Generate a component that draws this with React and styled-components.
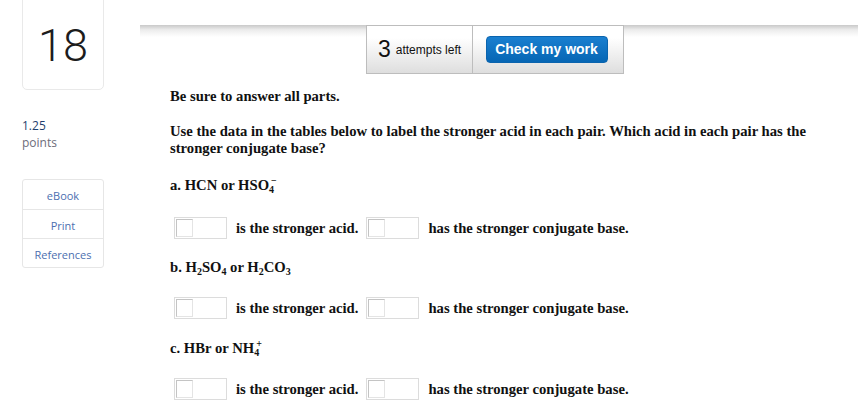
import React from "react";
import styled, { createGlobalStyle } from "styled-components";

const GlobalStyle = createGlobalStyle`
  body {
    margin: 0;
    background: #ffffff;
  }
`;

const Page = styled.div`
  display: flex;
  width: 858px;
  height: 416px;
  overflow: hidden;
`;

const Sidebar = styled.div`
  width: 82px;
  margin-left: 22px;
  display: flex;
  flex-direction: column;
  font-family: "Open Sans", "Liberation Sans", sans-serif;
`;

const NumberCard = styled.div`
  height: 97px;
  margin-top: -7px;
  box-sizing: border-box;
  border: 1px solid #e9e9e9;
  border-radius: 5px;
  display: flex;
  align-items: center;
  justify-content: center;
  font-family: Roboto, "Open Sans", sans-serif;
  font-weight: 300;
  font-size: 45px;
  color: #1c1c1c;
  padding-top: 8px;
`;

const Points = styled.div`
  margin-top: 27px;
  font-size: 12px;
  line-height: 17px;
  color: #1f3f6e;
  span {
    display: block;
    color: #6d6d7a;
  }
`;

const LinkList = styled.div`
  margin-top: 28px;
  border: 1px solid #e6e6e6;
  border-radius: 3px;
`;

const LinkItem = styled.div`
  height: 29px;
  display: flex;
  align-items: center;
  justify-content: center;
  padding-top: 2px;
  box-sizing: border-box;
  font-size: 11px;
  color: #4c6fb0;
  & + & {
    border-top: 1px solid #e6e6e6;
  }
`;

const Main = styled.div`
  flex: 1;
  margin-left: 36px;
  display: flex;
  flex-direction: column;
`;

const TopBar = styled.div`
  margin-top: 25px;
  padding-left: 226px;
  display: flex;
  background-image: linear-gradient(#c9c9c9, #ececec 40%, #ffffff);
  background-size: 100% 12px;
  background-repeat: no-repeat;
`;

const BarCell = styled.div`
  height: 49px;
  box-sizing: border-box;
  width: ${(p) => p.w}px;
  border: 1px solid #bdbdbd;
  border-left-width: ${(p) => (p.first ? 1 : 0)}px;
  background: linear-gradient(#ffffff 25%, #dedede);
  display: flex;
  align-items: center;
  justify-content: center;
  font-family: "Liberation Sans", Arial, sans-serif;
  color: #111;
`;

const AttemptsNum = styled.span`
  font-size: 23px;
  margin-right: 5px;
  line-height: 1;
`;

const AttemptsText = styled.span`
  font-size: 12px;
  margin-top: 1px;
`;

const CheckButton = styled.button`
  width: 122px;
  height: 27px;
  margin-left: -3px;
  margin-top: -1px;
  border: 1px solid #0a64ae;
  border-radius: 4px;
  background: linear-gradient(#1a7fd0, #0666b4);
  color: #fff;
  font-family: "Liberation Sans", Arial, sans-serif;
  font-weight: bold;
  font-size: 14px;
  padding: 0;
`;

const Content = styled.div`
  padding: 14px 20px 0 30px;
  font-family: "Liberation Serif", "Times New Roman", serif;
  font-weight: bold;
  font-size: 11pt;
  line-height: 17px;
  color: #111;
`;

const Para = styled.p`
  margin: 0 0 ${(p) => p.mb ?? 18}px;
  sub {
    font-size: 10px;
    line-height: 0;
    vertical-align: -3px;
  }
  sup {
    font-size: 10px;
    line-height: 0;
    vertical-align: 6px;
    margin-left: -3px;
  }
`;

const AnswerRow = styled.div`
  display: flex;
  align-items: center;
  height: 22px;
  margin: ${(p) => p.mt}px 0 ${(p) => p.mb}px 4px;
`;

const DropBox = styled.div`
  width: 53px;
  height: 22px;
  box-sizing: border-box;
  border: 1px solid #dcdcdc;
  padding: 1px;
  margin-right: ${(p) => p.mr}px;
  div {
    width: 17px;
    height: 18px;
    box-sizing: border-box;
    border: 1px solid #c4c4c4;
    border-right-color: #e4e4e4;
    border-bottom-color: #e4e4e4;
  }
`;

const RowText = styled.span`
  margin-right: ${(p) => p.mr || 0}px;
`;

function Answer({ mt, mb }) {
  return (
    <AnswerRow mt={mt} mb={mb}>
      <DropBox mr={9}>
        <div />
      </DropBox>
      <RowText mr={8}>is the stronger acid.</RowText>
      <DropBox mr={9}>
        <div />
      </DropBox>
      <RowText>has the stronger conjugate base.</RowText>
    </AnswerRow>
  );
}

export default function App() {
  return (
    <>
      <GlobalStyle />
      <Page>
        <Sidebar>
          <NumberCard>18</NumberCard>
          <Points>
            1.25
            <span>points</span>
          </Points>
          <LinkList>
            <LinkItem>eBook</LinkItem>
            <LinkItem>Print</LinkItem>
            <LinkItem>References</LinkItem>
          </LinkList>
        </Sidebar>
        <Main>
          <TopBar>
            <BarCell w={107} first>
              <AttemptsNum>3</AttemptsNum>
              <AttemptsText>attempts left</AttemptsText>
            </BarCell>
            <BarCell w={151}>
              <CheckButton>Check my work</CheckButton>
            </BarCell>
          </TopBar>
          <Content>
            <Para>Be sure to answer all parts.</Para>
            <Para mb={20}>
              Use the data in the tables below to label the stronger acid in
              each pair. Which acid in each pair has the stronger conjugate
              base?
            </Para>
            <Para mb={0}>
              a. HCN or HSO<sub>4</sub>
              <sup>−</sup>
            </Para>
            <Answer mt={23} mb={20} />
            <Para mb={0}>
              b. H<sub>2</sub>SO<sub>4</sub> or H<sub>2</sub>CO<sub>3</sub>
            </Para>
            <Answer mt={21} mb={21} />
            <Para mb={0}>
              c. HBr or NH<sub>4</sub>
              <sup>+</sup>
            </Para>
            <Answer mt={21} mb={0} />
          </Content>
        </Main>
      </Page>
    </>
  );
}
